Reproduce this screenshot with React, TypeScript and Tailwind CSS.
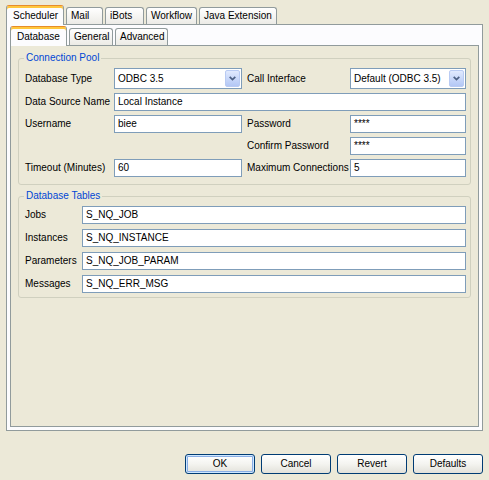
import React from 'react';

// XP-style scheduler settings dialog
const outerTabs = [
  { label: 'Scheduler', w: 'w-[58px]', active: true },
  { label: 'Mail', w: 'w-[37px]' },
  { label: 'iBots', w: 'w-[39px]' },
  { label: 'Workflow', w: 'w-[51px]' },
  { label: 'Java Extension', w: 'w-[78px]' },
];

const innerTabs = [
  { label: 'Database', w: 'w-[57px]', active: true },
  { label: 'General', w: 'w-[44px]' },
  { label: 'Advanced', w: 'w-[53px]' },
];

const tables = [
  ['Jobs', 'S_NQ_JOB'],
  ['Instances', 'S_NQ_INSTANCE'],
  ['Parameters', 'S_NQ_JOB_PARAM'],
  ['Messages', 'S_NQ_ERR_MSG'],
];

function Tab({ label, w, active, tall }: { label: string; w: string; active?: boolean; tall: string }) {
  if (active) {
    return (
      <div
        className={`${w} ${tall} relative z-10 -mb-px flex items-center pl-[6px] rounded-t-[3px] border-x border-[#919B9C] bg-[#FCFCFE] shadow-[inset_0_2px_0_#FFC73C] border-t border-t-[#E68B2C]`}
      >
        {label}
      </div>
    );
  }
  return (
    <div
      className={`${w} h-[17px] flex items-center pl-[4px] rounded-t-[3px] border-x border-t border-[#919B9C] bg-linear-to-b from-white to-[#ECEBE6]`}
    >
      {label}
    </div>
  );
}

function Field({ value, className = '' }: { value: string; className?: string }) {
  return (
    <div className={`h-[18px] border border-[#7F9DB9] bg-white pl-[3px] flex items-center ${className}`}>{value}</div>
  );
}

function Combo({ value }: { value: string }) {
  return (
    <div className="h-[21px] border border-[#7F9DB9] bg-white flex items-stretch">
      <span className="flex-1 pl-[3px] flex items-center">{value}</span>
      <span className="w-[15px] m-px rounded-[2px] border border-[#B9CBF3] bg-linear-to-b from-[#E1EAFE] to-[#B3C7F5] flex items-center justify-center">
        <svg width="7" height="5" viewBox="0 0 7 5">
          <path d="M0.7 0.8 L3.5 3.6 L6.3 0.8" stroke="#4D6185" strokeWidth="1.7" fill="none" />
        </svg>
      </span>
    </div>
  );
}

function Label({ children, className = '' }: { children: React.ReactNode; className?: string }) {
  return <div className={`flex items-center whitespace-nowrap ${className}`}>{children}</div>;
}

function Button({ label, isDefault }: { label: string; isDefault?: boolean }) {
  return (
    <button
      className={`w-[70px] h-[20px] rounded-[3px] border border-[#003C74] bg-linear-to-b from-white via-[#F4F4F0] to-[#E2E1DA] text-black ${
        isDefault ? 'shadow-[inset_0_0_0_1px_#CEE7FF,inset_0_0_0_2px_#89ADE4]' : ''
      }`}
    >
      {label}
    </button>
  );
}

export default function App() {
  return (
    <div className="w-[489px] h-[480px] bg-[#ECE9D8] px-[6px] pt-[5px] text-[10px] leading-[12px] text-black font-['Liberation_Sans',Arial,sans-serif]">
      {/* top-level tabs */}
      <div className="flex items-end h-[19px] gap-[2px]">
        {outerTabs.map((t) => (
          <Tab key={t.label} {...t} tall="h-[20px]" />
        ))}
      </div>

      <div className="h-[407px] border border-[#919B9C] bg-[#FCFCFE] pt-px px-[3px] pb-[3px] flex flex-col">
        {/* sub tabs */}
        <div className="flex items-end h-[19px] gap-[2px]">
          {innerTabs.map((t) => (
            <Tab key={t.label} {...t} tall="h-[20px]" />
          ))}
        </div>

        <div className="flex-1 border border-[#919B9C] bg-[#ECE9D8] pt-[6px]">
          <fieldset className="mx-[7px] border border-[#D0D0BF] rounded-[3px] pl-[6px] pr-[4px] pt-[4px] pb-[7px]">
            <legend className="-ml-[1px] px-[2px] text-[#0046D5]">Connection Pool</legend>
            <div className="grid grid-cols-[84px_128px_98px_116px] gap-x-[5px] gap-y-[4px]">
              <Label>Database Type</Label>
              <Combo value="ODBC 3.5" />
              <Label>Call Interface</Label>
              <Combo value="Default (ODBC 3.5)" />

              <Label>Data Source Name</Label>
              <Field value="Local Instance" className="col-span-3" />

              <Label>Username</Label>
              <Field value="biee" />
              <Label>Password</Label>
              <Field value="****" />

              <Label className="col-start-3">Confirm Password</Label>
              <Field value="****" />

              <Label>Timeout (Minutes)</Label>
              <Field value="60" />
              <Label>Maximum Connections</Label>
              <Field value="5" />
            </div>
          </fieldset>

          <fieldset className="mt-[5px] mx-[7px] border border-[#D0D0BF] rounded-[3px] pl-[6px] pr-[4px] pt-[4px] pb-[4px]">
            <legend className="-ml-[1px] px-[2px] text-[#0046D5]">Database Tables</legend>
            <div className="grid grid-cols-[52px_1fr] gap-x-[5px] gap-y-[5px]">
              {tables.map(([name, value]) => (
                <React.Fragment key={name}>
                  <Label>{name}</Label>
                  <Field value={value} />
                </React.Fragment>
              ))}
            </div>
          </fieldset>
        </div>
      </div>

      <div className="mt-[23px] flex justify-end gap-[6px]">
        <Button label="OK" isDefault />
        <Button label="Cancel" />
        <Button label="Revert" />
        <Button label="Defaults" />
      </div>
    </div>
  );
}
